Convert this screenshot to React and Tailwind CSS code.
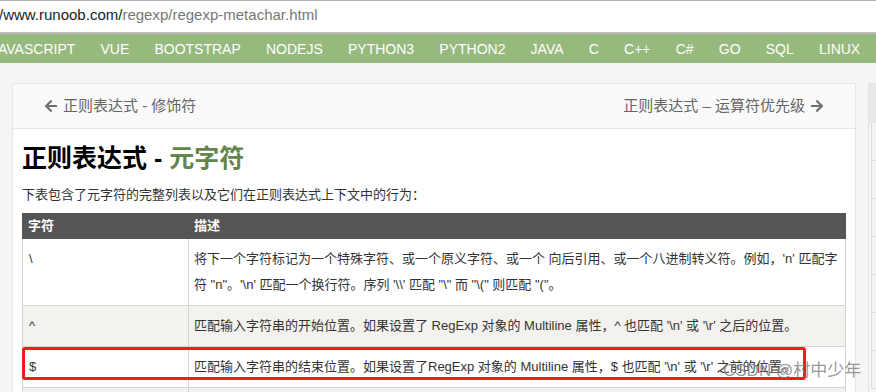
import React from "react";
import { FaArrowLeft, FaArrowRight } from "react-icons/fa";

const font = "font-['Liberation_Sans','Noto_Sans_CJK_SC',sans-serif]";

const navItems = ["JAVASCRIPT", "VUE", "BOOTSTRAP", "NODEJS", "PYTHON3", "PYTHON2", "JAVA", "C", "C++", "C#", "GO", "SQL", "LINUX", "JQUERY"];

export default function App() {
  return (
    <div className={`relative w-[876px] h-[392px] overflow-hidden bg-[#f5f5f5] ${font}`}>
      {/* address bar */}
      <div className="h-[34px] bg-white border-t border-[#b0b0b0] border-b-2 border-b-[#bdbdbd] flex items-center">
        <div className="text-[15px] leading-none whitespace-nowrap -mt-[4px] -ml-[1px]">
          <span className="text-[#222]">/www.runoob.com/</span>
          <span className="text-[#777]">regexp/regexp-metachar.html</span>
        </div>
      </div>
      {/* green nav */}
      <div className="h-[29px] bg-[#96b97d] flex items-center gap-[25.2px] -ml-[9px] whitespace-nowrap">
        {navItems.map((n) => (
          <span key={n} className="text-white text-[14px] leading-none shrink-0">{n}</span>
        ))}
      </div>
      {/* content row */}
      <div className="flex mt-[20px]">
        <div className="ml-[12px] w-[844px] shrink-0 border border-[#e6e6e6] bg-white h-[400px]">
          <div className="h-[45px] bg-[#fafafa] border-b border-[#e2e6ee] flex items-center justify-between pl-[31px] pr-[31px] text-[15px] text-[#666]">
            <div className="flex items-center gap-[5px]">
              <FaArrowLeft className="text-[#6f6f6f] w-[14px] h-[14px]" />
              <span>正则表达式 - 修饰符</span>
            </div>
            <div className="flex items-center gap-[5px]">
              <span>正则表达式 – 运算符优先级</span>
              <FaArrowRight className="text-[#6f6f6f] w-[14px] h-[14px]" />
            </div>
          </div>
          <div className="pl-[9px] pr-[9px]">
            <h1 className="mt-[14px] text-[25px] font-bold leading-[30px] text-black">
              正则表达式 - <span className="text-[#64854c]">元字符</span>
            </h1>
            <p className="mt-[12px] text-[13px] leading-[20px] text-[#333]">下表包含了元字符的完整列表以及它们在正则表达式上下文中的行为：</p>
            <table className="mt-[8px] w-[824px] border-collapse text-[13px] text-[#333] table-fixed">
              <colgroup>
                <col className="w-[166px]" />
                <col />
              </colgroup>
              <thead>
                <tr className="bg-[#555] text-white h-[25px]">
                  <th className="text-left font-bold px-[5px] py-0 border border-[#555]">字符</th>
                  <th className="text-left font-bold px-[5px] py-0 border border-[#555]">描述</th>
                </tr>
              </thead>
              <tbody>
                <tr className="bg-white">
                  <td className="align-top px-[6px] py-[7px] leading-[26px] border border-[#d4d4d4]">\</td>
                  <td className="align-top px-[5px] py-[7px] leading-[26px] border border-[#d4d4d4]">
                    将下一个字符标记为一个特殊字符、或一个原义字符、或一个 向后引用、或一个八进制转义符。例如，'n' 匹配字<br />
                    符 "n"。'\n' 匹配一个换行符。序列 '\\' 匹配 "\" 而 "\(" 则匹配 "("。
                  </td>
                </tr>
                <tr className="bg-[#f3f2ee]">
                  <td className="align-top px-[6px] py-[7px] leading-[26px] border border-[#d4d4d4]">^</td>
                  <td className="align-top px-[5px] py-[7px] leading-[26px] border border-[#d4d4d4]">
                    匹配输入字符串的开始位置。如果设置了 RegExp 对象的 Multiline 属性，^ 也匹配 '\n' 或 '\r' 之后的位置。
                  </td>
                </tr>
                <tr className="bg-white">
                  <td className="align-top px-[6px] py-[7px] leading-[26px] border border-[#d4d4d4]">$</td>
                  <td className="align-top px-[5px] py-[7px] leading-[26px] border border-[#d4d4d4]">
                    匹配输入字符串的结束位置。如果设置了RegExp 对象的 Multiline 属性，$ 也匹配 '\n' 或 '\r' 之前的位置。
                  </td>
                </tr>
                <tr className="bg-[#f3f2ee]">
                  <td className="align-top px-[6px] py-[7px] leading-[26px] border border-[#d4d4d4]">*</td>
                  <td className="align-top px-[5px] py-[7px] leading-[26px] border border-[#d4d4d4]">
                    匹配前面的子表达式零次或多次。
                  </td>
                </tr>
              </tbody>
            </table>
          </div>
        </div>
        {/* sidebar */}
        <div className="ml-[12px] w-[200px] shrink-0 border-l border-[#e2e2e2]">
          <div className="h-[40px] bg-[#e8e8e8]"></div>
          {[0, 1, 2, 3, 4, 5, 6].map((i) => (
            <div key={i} className="h-[38px] bg-[#f3f2ee] border-b border-[#e0e0e0] border-l border-l-[#ddd] ml-[2px]"></div>
          ))}
        </div>
      </div>
      {/* red highlight */}
      <div className="absolute left-[22px] top-[347px] w-[784px] h-[33px] border-[3px] border-[#f01c1c] rounded-[3px]"></div>
      {/* watermark */}
      <div className="absolute left-[723px] top-[362px] text-[17px] leading-none text-[#7a7a7a]/80 whitespace-nowrap">CSDN @村中少年</div>
    </div>
  );
}
